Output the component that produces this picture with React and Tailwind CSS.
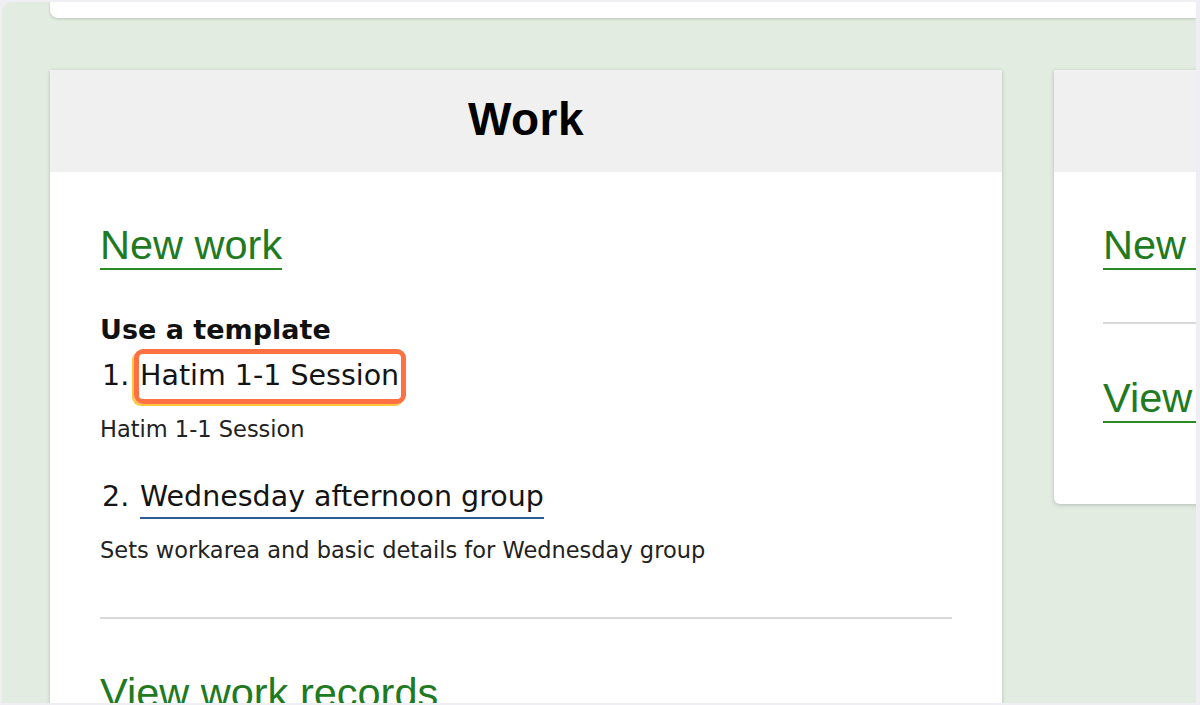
import React from 'react';

const link =
  "inline-block font-['Liberation_Sans',Arial,sans-serif] text-[41.5px] leading-[40px] text-[#217a1f] pb-[3px] border-b-2 border-[#2c8a24]";

function TemplateItem({ num, title, note, boxed }) {
  return (
    <li>
      <div className="flex items-start text-[28.5px] leading-[34px] text-[#141414]">
        <span className="w-[40px] shrink-0 pl-[2px]">{num}.</span>
        <span
          className={
            'relative inline-block pb-[3px] border-b-2 ' +
            (boxed ? 'border-transparent' : 'border-[#2f5a95]')
          }
        >
          {boxed && (
            <span className="absolute -left-[6px] -right-[7px] -top-[10px] -bottom-[8px] rounded-[9px] border-[5px] border-[#ff7043] shadow-[-2px_2px_0_#ffc53d]" />
          )}
          <span className="relative">{title}</span>
        </span>
      </div>
      <p className="mt-[17px] text-[22.5px] leading-[28px] text-[#222]">{note}</p>
    </li>
  );
}

export default function App() {
  return (
    <div className="w-[1200px] h-[705px] overflow-hidden bg-[#efeff3] pt-[2px] pl-[2px] pr-[4px] pb-[2px]">
      <div className="h-full overflow-hidden rounded-tl-[10px] bg-[#e2ece1] font-['DejaVu_Sans',sans-serif]">
        {/* top card */}
        <div className="ml-[48px] h-[16px] rounded-bl-lg bg-white shadow-[0_1px_3px_rgba(0,0,0,0.18)]" />

        <div className="mt-[52px] ml-[48px] flex gap-[52px] items-start">
          {/* WORK */}
          <div className="w-[952px] shrink-0 bg-white shadow-[0_1px_4px_rgba(0,0,0,0.2)]">
            <div className="h-[102px] bg-[#f0f0f0] flex items-center justify-center">
              <h2 className="font-['Liberation_Sans',Arial,sans-serif] font-bold text-[46px] leading-none tracking-[0.5px] text-black -mt-[4px]">
                Work
              </h2>
            </div>
            <div className="px-[50px] pt-[53px] pb-[60px]">
              <a className={link}>New work</a>

              <h3 className="mt-[44px] text-[27px] leading-[32px] font-bold text-[#111]">
                Use a template
              </h3>
              <ol className="mt-[13px] space-y-[37px]">
                <TemplateItem num="1" title="Hatim 1-1 Session" note="Hatim 1-1 Session" boxed />
                <TemplateItem
                  num="2"
                  title="Wednesday afternoon group"
                  note="Sets workarea and basic details for Wednesday group"
                />
              </ol>

              <hr className="mt-[53px] border-0 h-[2px] bg-[#d9d9d9]" />

              <a className={link + ' mt-[54px]'}>View work records</a>
            </div>
          </div>

          {/* second column */}
          <div className="w-[200px] shrink-0 rounded-b-md bg-white shadow-[0_1px_4px_rgba(0,0,0,0.2)]">
            <div className="h-[102px] bg-[#f0f0f0]" />
            <div className="pl-[49px] pt-[53px] pb-[81px]">
              <a className={link + ' whitespace-nowrap'}>New client</a>
              <hr className="mt-[52px] border-0 h-[2px] bg-[#d9d9d9]" />
              <a className={link + ' mt-[54px] whitespace-nowrap'}>View clients</a>
            </div>
          </div>
        </div>
      </div>
    </div>
  );
}
